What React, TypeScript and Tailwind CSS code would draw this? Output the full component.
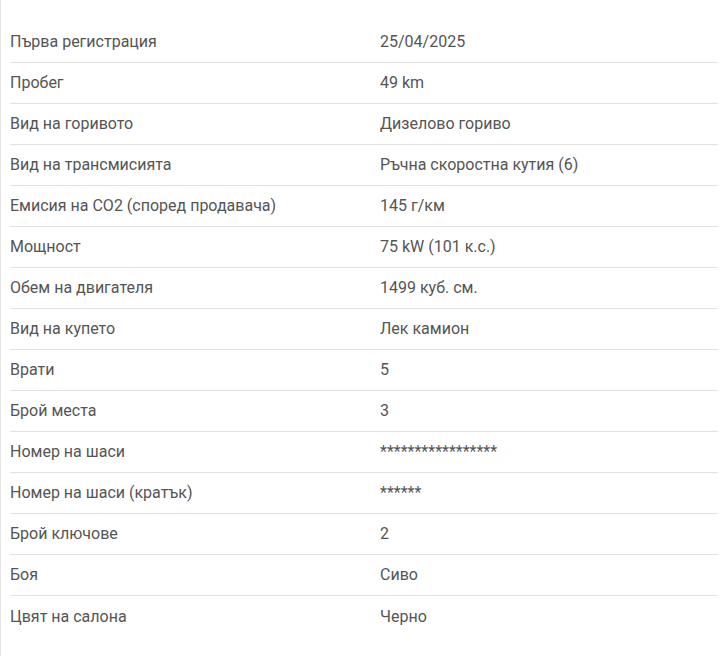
const rows: [string, string][] = [
  ["Първа регистрация", "25/04/2025"],
  ["Пробег", "49 km"],
  ["Вид на горивото", "Дизелово гориво"],
  ["Вид на трансмисията", "Ръчна скоростна кутия (6)"],
  ["Емисия на CO2 (според продавача)", "145 г/км"],
  ["Мощност", "75 kW (101 к.с.)"],
  ["Обем на двигателя", "1499 куб. см."],
  ["Вид на купето", "Лек камион"],
  ["Врати", "5"],
  ["Брой места", "3"],
  ["Номер на шаси", "*****************"],
  ["Номер на шаси (кратък)", "******"],
  ["Брой ключове", "2"],
  ["Боя", "Сиво"],
  ["Цвят на салона", "Черно"],
];

export default function App() {
  return (
    <div className="min-h-[656px] w-[721px] border-l border-[#e6e6e6] bg-white pl-[9px] pr-[3px] pt-[22px] font-['Roboto',sans-serif] text-[16px] text-[#555]">
      {rows.map(([label, value], i) => (
        <div
          key={label}
          className={
            "grid h-[41px] grid-cols-[370px_1fr] items-center" +
            (i < rows.length - 1 ? " border-b border-[#e2e2e2]" : "")
          }
        >
          <span>{label}</span>
          <span>{value}</span>
        </div>
      ))}
    </div>
  );
}
